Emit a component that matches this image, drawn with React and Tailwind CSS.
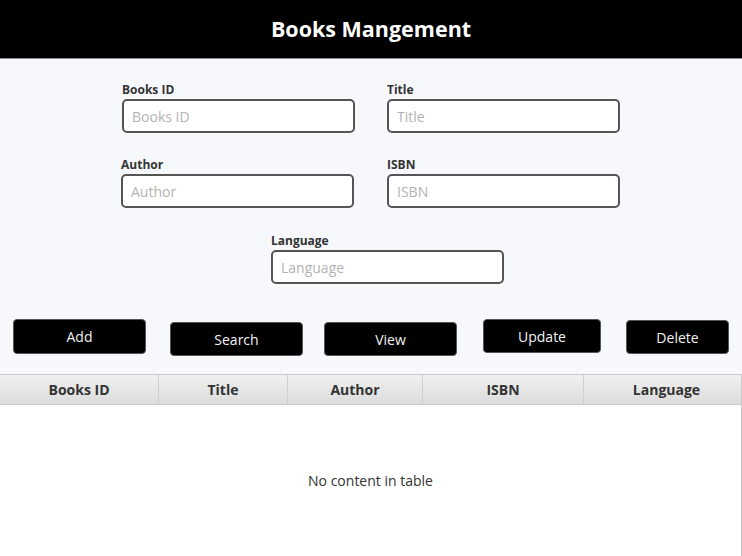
import React from 'react';

const font = { fontFamily: '"Open Sans", "Noto Sans", sans-serif' };

const Field = ({ label, className }) => (
  <div className={`flex flex-col w-[233px] ${className || ''}`}>
    <label className="h-[17px] text-[12px] font-bold leading-[16px] text-[#333]">{label}</label>
    <input
      type="text"
      placeholder={label}
      className="h-[34px] w-full rounded-[5px] border-2 border-[#555] bg-white px-[8px] text-[14px] text-[#333] placeholder:text-[#b3b3b3] focus:outline-none"
    />
  </div>
);

const Btn = ({ children, className }) => (
  <button className={`flex items-center justify-center rounded-[4px] border border-[#555] bg-black text-[14px] text-[#f2f2f2] ${className}`}>
    {children}
  </button>
);

export default function App() {
  const columns = [
    { name: 'Books ID', w: 'w-[159px]' },
    { name: 'Title', w: 'w-[129px]' },
    { name: 'Author', w: 'w-[135px]' },
    { name: 'ISBN', w: 'w-[161px]' },
    { name: 'Language', w: 'flex-1 pl-[8px]' },
  ];

  return (
    <div className="flex h-[556px] w-[742px] flex-col overflow-hidden bg-[#f7f8fc]" style={font}>
      {/* Header */}
      <div className="flex h-[59px] shrink-0 items-center justify-center border-b border-[#8a8a8a] bg-black">
        <h1 className="text-[21.5px] font-bold text-white">Books Mangement</h1>
      </div>

      {/* Form */}
      <div className="flex flex-col pt-[23px]">
        <div className="flex">
          <Field label="Books ID" className="ml-[122px]" />
          <Field label="Title" className="ml-[32px]" />
        </div>
        <div className="mt-[24px] flex">
          <Field label="Author" className="ml-[121px]" />
          <Field label="ISBN" className="ml-[33px]" />
        </div>
        <div className="mt-[25px] flex">
          <Field label="Language" className="ml-[271px]" />
        </div>
      </div>

      {/* Buttons */}
      <div className="mt-[35px] flex h-[55px] items-start">
        <Btn className="ml-[13px] h-[35px] w-[133px]">Add</Btn>
        <Btn className="ml-[24px] mt-[3px] h-[34px] w-[133px]">Search</Btn>
        <Btn className="ml-[21px] mt-[3px] h-[34px] w-[133px]">View</Btn>
        <Btn className="ml-[26px] h-[34px] w-[118px]">Update</Btn>
        <Btn className="ml-[25px] mt-[1px] h-[34px] w-[103px]">Delete</Btn>
      </div>

      {/* Table */}
      <div className="flex w-[742px] flex-1 flex-col border-r border-t border-[#c8c8c8] bg-white">
        <div className="flex h-[30px] shrink-0 border-b border-[#c8c8c8] bg-gradient-to-b from-[#f0f0f0] to-[#dcdcdc]">
          {columns.map((c, i) => (
            <div
              key={c.name}
              className={`flex items-center justify-center text-[14px] font-bold text-[#333] ${c.w} ${i < columns.length - 1 ? 'border-r border-[#cfcfcf]' : ''}`}
            >
              {c.name}
            </div>
          ))}
        </div>
        <div className="flex flex-1 items-center justify-center text-[14px] text-[#333]">
          No content in table
        </div>
      </div>
    </div>
  );
}
